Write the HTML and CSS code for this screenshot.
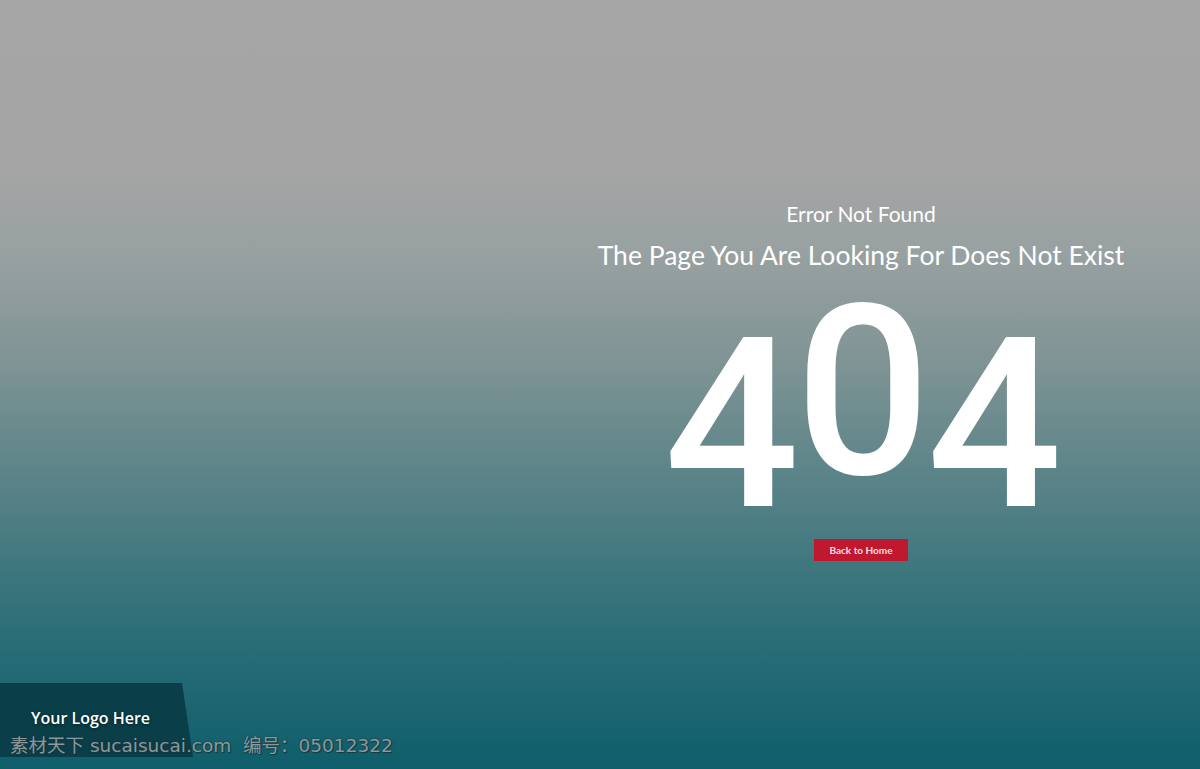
FILE: index.html
```html
<!DOCTYPE html>
<html lang="en">
<head>
    <meta charset="UTF-8">
    <meta name="viewport" content="width=device-width, initial-scale=1.0">
    <title>404 - Error Not Found</title>
    <link rel="stylesheet" href="styles.css">
</head>
<body>

    <div class="page">
        <div class="main">
            <div class="error-box">
                <h3 class="sub">Error Not Found</h3>
                <h2 class="title">The Page You Are Looking For Does Not Exist</h2>
                <div class="big">4<span class="up">0</span>4</div>
                <a href="#" class="btn">Back to Home</a>
            </div>
        </div>

        <div class="footer">
            <div class="logo">Your Logo Here</div>
        </div>

        <div class="watermark">素材天下 sucaisucai.com&nbsp;&nbsp;编号：05012322</div>
    </div>

</body>
</html>
```

FILE: styles.css
```css
/* dasar */
body {
    margin: 0;
    font-family: 'Lato', 'Open Sans', sans-serif;
    color: #fff;
}
.page {
    position: relative;
    height: 769px;
    display: flex;
    flex-direction: column;
    overflow: hidden;
    background: linear-gradient(to bottom, #a6a6a6 0, #a5a5a5 170px, #97a0a1 260px, #809495 360px, #60868a 460px, #41787f 560px, #276c76 650px, #0f5e6b 769px);
}
.main { flex: 1; display: flex; padding-left: 522px; }
.error-box { flex: 1; text-align: center; padding-top: 200px; }

.sub { margin: 0; font-size: 21px; font-weight: 400; line-height: 28px; }
.title { margin: 10px 0 0; font-size: 26.5px; font-weight: 400; line-height: 34px; }

.big {
    margin-top: 16px;
    font-family: 'Roboto', sans-serif;
    font-weight: 500;
    font-size: 238px;
    line-height: 210px;
    height: 210px;
    letter-spacing: -4px;
}
.big .up { vertical-align: 32px; }

.btn {
    display: inline-block;
    margin-top: 41px;
    padding: 0 15px;
    height: 22px;
    line-height: 22px;
    background: #c0182e;
    color: #f6dfe2;
    font-size: 10px;
    font-weight: 700;
    text-decoration: none;
}

.footer { height: 86px; }
.logo {
    width: 193px;
    height: 74px;
    background: #0a3e48;
    clip-path: polygon(0 0, 182px 0, 193px 100%, 0 100%);
    font-family: 'Open Sans', sans-serif;
    font-weight: 600;
    font-size: 16px;
    line-height: 70px;
    padding-left: 31px;
    box-sizing: border-box;
    text-shadow: 0 1px 3px rgba(0, 0, 0, 0.5);
}

.watermark {
    position: absolute;
    left: 10px;
    bottom: 12px;
    font-family: 'DejaVu Sans', 'Noto Sans CJK SC', sans-serif;
    font-size: 18.5px;
    color: #8b979a;
    text-shadow: 0 0 2px #173a40, 1px 1px 1px #173a40;
}
```
